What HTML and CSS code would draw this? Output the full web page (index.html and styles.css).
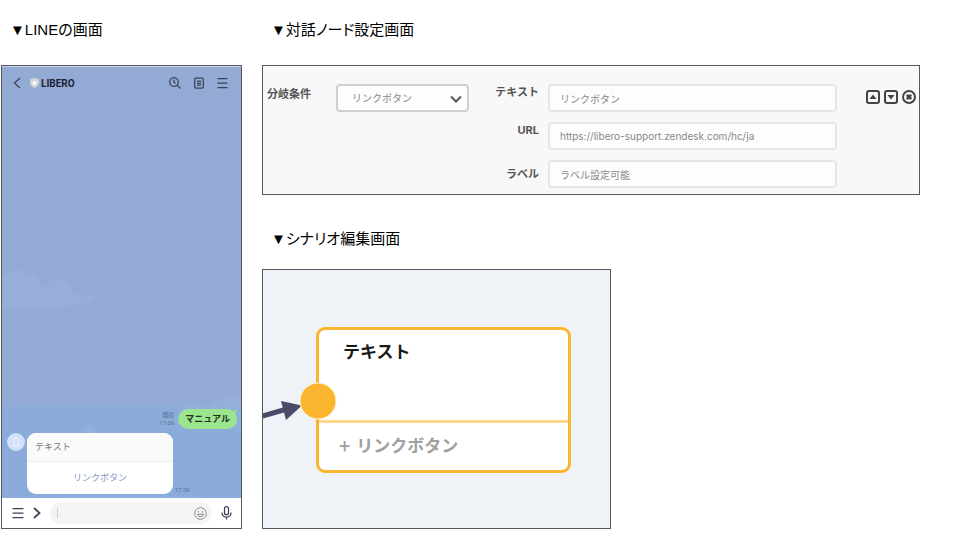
FILE: index.html
```html
<!DOCTYPE html>
<html lang="ja">
<head>
<meta charset="utf-8">
<meta name="viewport" content="width=device-width, initial-scale=1">
<title>リンクボタン</title>
<link rel="stylesheet" href="styles.css">
</head>
<body>
<main class="page">
  <section class="column">
    <h2 class="heading">▼LINEの画面</h2>
    <div class="phone">
      <svg class="clouds" viewBox="0 0 239 462" preserveAspectRatio="none" aria-hidden="true">
        <path class="cloud" d="M0 214 Q5 204 12 205 Q18 198 21 207 Q24 213 29 208 Q36 206 38 218 Q41 224 45 219 Q51 212 60 214 Q70 218 72 229 Q84 227 95 232 Q88 238 74 238 Q60 244 42 241 Q22 246 0 242Z"/>
        <path class="cloud" d="M175 342 Q190 334 207 342 Q215 328 239 331 V365 Q210 360 175 342Z"/>
        <path class="cloud" d="M79 366 Q80 359 87 360 Q94 361 94 368Z"/>
      </svg>
      <header class="chat-bar">
        <button class="icon-button" aria-label="戻る">
          <svg width="8" height="12" viewBox="0 0 8 12"><path class="line" d="M7 1 1.500 6 7 11"/></svg>
        </button>
        <svg class="shield" width="9" height="10" viewBox="0 0 9 10" aria-hidden="true"><path fill="#d3d3d3" d="M0 1 4.500 0 9 1V5Q9 8 4.500 10 0 8 0 5Z"/><path fill="#fff" d="M4.500 2 5.300 3.900 7.300 4.200 5.800 5.500 6.200 7.400 4.500 6.400 2.800 7.400 3.200 5.500 1.700 4.200 3.700 3.900Z"/></svg>
        <span class="chat-name">LIBERO</span>
        <button class="icon-button" aria-label="検索">
          <svg width="12" height="12" viewBox="0 0 12 12"><circle class="line" cx="5" cy="5" r="4.300"/><path class="line" d="M5 2.500V5.200L6.500 6.500M8.200 8.200 11.500 11.500"/></svg>
        </button>
        <button class="icon-button" aria-label="ノート">
          <svg width="10" height="12" viewBox="0 0 10 12"><rect class="line" x=".7" y="1" width="8.600" height="10" rx="1"/><path class="line" d="M3 4H7M3 6H7M3 8H7"/></svg>
        </button>
        <button class="icon-button" aria-label="メニュー">
          <svg width="11" height="12" viewBox="0 0 11 12"><path class="line" d="M.5 1.500H10.500M.5 6H10.500M.5 10.500H10.500"/></svg>
        </button>
      </header>
      <div class="messages">
        <div class="sent">
          <div class="stamp">既読<br>17:06</div>
          <div class="bubble">マニュアル
            <svg class="tail" width="7" height="7" viewBox="0 0 7 7" aria-hidden="true"><path fill="#9be58f" d="M0 2Q4 3 7 0 6.500 4 3 7Z"/></svg>
          </div>
        </div>
        <div class="received">
          <svg class="avatar" width="18" height="18" viewBox="0 0 18 18" aria-hidden="true"><circle cx="9" cy="9" r="9" fill="#d1e0fb"/><path fill="none" stroke="#e8f0ff" d="M9 4.500A2 2 0 0 1 10.500 8L12.500 12.500H5.500L7.500 8A2 2 0 0 1 9 4.500Z"/></svg>
          <div class="card">
            <div class="card-title">テキスト</div>
            <a class="card-link" href="#">リンクボタン</a>
          </div>
          <div class="stamp">17:06</div>
        </div>
      </div>
      <footer class="composer">
        <button class="icon-button" aria-label="メニュー">
          <svg width="12" height="12" viewBox="0 0 12 12"><path class="line" d="M.5 1.500H11.500M.5 6H11.500M.5 10.500H11.500"/></svg>
        </button>
        <button class="icon-button" aria-label="開く">
          <svg width="8" height="12" viewBox="0 0 8 12"><path class="line thick" d="M1 1 6.500 6 1 11"/></svg>
        </button>
        <div class="entry">
          <span class="caret"></span>
          <input class="entry-input" type="text" aria-label="メッセージ">
          <svg width="13" height="13" viewBox="0 0 13 13" aria-hidden="true"><circle class="soft" cx="6.500" cy="6.500" r="5.800"/><path class="soft" d="M3.500 7.200Q4 9.800 6.500 9.800T9.500 7.200ZM4.500 4V5.500M8.500 4V5.500"/></svg>
        </div>
        <button class="icon-button" aria-label="音声">
          <svg width="11" height="14" viewBox="0 0 11 14"><rect class="line" x="3.500" y=".7" width="4" height="8" rx="2"/><path class="line" d="M1 6.500Q1 11 5.500 11T10 6.500M5.500 11V13.500"/></svg>
        </button>
      </footer>
    </div>
  </section>

  <div class="column">
    <section>
      <h2 class="heading">▼対話ノード設定画面</h2>
      <form class="settings">
        <label class="label branch-label" for="branch">分岐条件</label>
        <div class="select-wrap">
          <select class="control select" id="branch"><option>リンクボタン</option></select>
          <svg class="chevron" width="12" height="8" viewBox="0 0 12 8" aria-hidden="true"><path fill="none" stroke="#555" stroke-width="2" d="M1 1.500 6 6.500 11 1.500"/></svg>
        </div>
        <div class="fields">
          <label class="label" for="text">テキスト</label>
          <input class="control" id="text" type="text" value="リンクボタン">
          <label class="label" for="url">URL</label>
          <input class="control" id="url" type="text" value="https://libero-support.zendesk.com/hc/ja">
          <label class="label label-middle" for="name">ラベル</label>
          <input class="control" id="name" type="text" value="ラベル設定可能">
        </div>
        <div class="actions">
          <button class="icon-button" type="button" aria-label="上へ">
            <svg width="14" height="14" viewBox="0 0 14 14"><rect class="frame" x="1" y="1" width="12" height="12" rx="2"/><path fill="#444" d="M7 4.500 10.500 9H3.500Z"/></svg>
          </button>
          <button class="icon-button" type="button" aria-label="下へ">
            <svg width="14" height="14" viewBox="0 0 14 14"><rect class="frame" x="1" y="1" width="12" height="12" rx="2"/><path fill="#444" d="M7 9.500 10.500 5H3.500Z"/></svg>
          </button>
          <button class="icon-button" type="button" aria-label="削除">
            <svg width="14" height="14" viewBox="0 0 14 14"><circle class="frame" cx="7" cy="7" r="6"/><path stroke="#444" stroke-width="2.500" d="M4.800 4.800 9.200 9.200M9.200 4.800 4.800 9.200"/></svg>
          </button>
        </div>
      </form>
    </section>

    <section class="scenario-section">
      <h2 class="heading scenario-heading">▼シナリオ編集画面</h2>
      <div class="canvas">
        <div class="node">
          <div class="node-title">テキスト</div>
          <div class="node-option"><span class="plus">+</span>リンクボタン</div>
        </div>
        <svg class="connector" width="76" height="44" viewBox="0 0 76 44" aria-hidden="true">
          <path stroke="#4b4b69" stroke-width="5" d="M-2 37.500 24 30"/>
          <path fill="#4b4b69" d="M18 22 39 26.500 23 41Z"/>
          <circle cx="55" cy="22" r="18" fill="#fbb52f" stroke="#fff3dc"/>
        </svg>
      </div>
    </section>
  </div>
</main>
</body>
</html>
```
FILE: styles.css
```css
* { box-sizing: border-box; }

body {
  margin: 0;
  background: #fff;
  color: #000;
  font-family: Roboto, "Noto Sans CJK JP", sans-serif;
}

.page {
  display: grid;
  grid-template-columns: 241fr 658fr;
  gap: 20px;
  padding: 20px 40px 11px 1px;
}

.column {
  display: flex;
  flex-direction: column;
  min-width: 0;
}

.heading {
  margin: 0 0 25px;
  padding-left: 9px;
  font: 400 15px/20px "Liberation Sans", "Noto Sans CJK JP", sans-serif;
  font-feature-settings: "palt";
}

.icon-button {
  display: flex;
  padding: 0;
  border: 0;
  background: none;
}

.line { fill: none; stroke: #3a4356; stroke-width: 1.25; }
.thick { stroke-width: 1.75; }
.soft { fill: none; stroke: #888; stroke-width: 1; }

/* Chat */
.phone {
  position: relative;
  display: flex;
  flex: 1;
  flex-direction: column;
  border: 1px solid #55585e;
  background: linear-gradient(to bottom, #93aad5 340px, #8bacdb 341px);
}

.clouds {
  position: absolute;
  inset: 0;
  width: 100%;
  height: 100%;
}

.cloud { fill: #a4bbe2; opacity: .25; filter: blur(1px); }

.chat-bar {
  position: relative;
  display: flex;
  align-items: center;
  gap: 13px;
  height: 33px;
  padding: 0 13px 0 11px;
  border-top: 1px solid #c9d5ea;
}

.shield { margin: 0 -11px 0 -4px; }

.chat-name {
  flex: 1;
  color: #1c2230;
  font-size: 10px;
  font-weight: 700;
}

.messages {
  position: relative;
  display: flex;
  flex: 1;
  flex-direction: column;
  justify-content: flex-end;
  gap: 4px;
  padding: 0 4px 4px 5px;
}

.sent {
  display: flex;
  justify-content: flex-end;
  gap: 4px;
}

.stamp {
  align-self: flex-end;
  color: #5b6c8f;
  font-size: 6px;
  line-height: 8px;
  text-align: right;
}

.sent .stamp { padding-bottom: 2px; }

.bubble {
  position: relative;
  padding: 0 7px;
  border-radius: 10px;
  background: #9be58f;
  color: #22331f;
  font-size: 9px;
  font-weight: 700;
  line-height: 20px;
}

.tail {
  position: absolute;
  top: 0;
  right: 0;
}

.received {
  display: flex;
  gap: 2px;
}

.avatar { flex: none; }

.card {
  flex: 0 1 146px;
  overflow: hidden;
  border-radius: 9px;
  background: #fff;
  font-size: 9px;
}

.card-title {
  padding: 0 8px;
  border-bottom: 1px solid #f0f0f0;
  background: #fafafa;
  color: #777;
  line-height: 28px;
}

.card-link {
  display: block;
  color: #8398c0;
  line-height: 32px;
  text-align: center;
  text-decoration: none;
}

.composer {
  position: relative;
  display: flex;
  align-items: center;
  gap: 9px;
  height: 30px;
  padding: 0 9px 0 10px;
  background: #fff;
}

.entry {
  display: flex;
  flex: 1;
  align-items: center;
  height: 22px;
  padding: 0 5px 0 7px;
  border-radius: 11px;
  background: #f4f4f4;
}

.caret {
  width: 1px;
  height: 10px;
  background: #ccc;
}

.entry-input {
  flex: 1;
  min-width: 0;
  border: 0;
  outline: 0;
  background: none;
  font-size: 9px;
}

/* Node settings */
.settings {
  display: grid;
  grid-template-columns: 69px 133fr 368fr 79px;
  align-items: start;
  padding: 18px 3px 6px 4px;
  border: 1px solid #55585c;
  background: #f8f8f8;
}

.label {
  color: #555;
  font-family: Inter, "Noto Sans CJK JP", sans-serif;
  font-size: 11px;
  font-weight: 700;
  line-height: 16px;
}

.branch-label { line-height: 20px; }

.control {
  width: 100%;
  min-width: 0;
  height: 28px;
  padding: 0 10px;
  border: 2px solid #e6e6e6;
  border-radius: 4px;
  background: #fdfdfd;
  color: #888;
  font: 400 10px/16px Inter, "Noto Sans CJK JP", sans-serif;
}

.select-wrap { position: relative; }

.select {
  padding-left: 14px;
  border-color: #cfcfcf;
  appearance: none;
}

.chevron {
  position: absolute;
  top: 11px;
  right: 7px;
}

.fields {
  display: grid;
  grid-template-columns: 70px 1fr;
  gap: 10px 9px;
}

.fields .label { text-align: right; }
.fields .label-middle { align-self: center; }

.actions {
  display: flex;
  justify-content: flex-end;
  gap: 4px;
  padding-top: 6px;
}

.frame { fill: none; stroke: #444; stroke-width: 2; }

/* Scenario */
.scenario-section { margin-top: 34px; }
.scenario-heading { margin-bottom: 20px; }

.canvas {
  position: relative;
  width: 53%;
  height: 260px;
  overflow: hidden;
  border: 1px solid #55585c;
  background: #eff3f7;
}

.node {
  position: absolute;
  top: 57px;
  left: 53px;
  width: 255px;
  border: 3px solid #fbb52f;
  border-radius: 9px;
  background: #fff;
  font-size: 17px;
  font-weight: 700;
}

.node-title {
  height: 93px;
  padding: 10px 24px;
  border-bottom: 3px solid #ffd78c;
  color: #1a1a1a;
  line-height: 24px;
}

.node-option {
  display: flex;
  gap: 6px;
  padding: 0 20px;
  color: #a0a0a0;
  line-height: 47px;
}

.plus {
  font-size: 20px;
  font-weight: 400;
}

.connector {
  position: absolute;
  top: 109px;
  left: 0;
}
```
